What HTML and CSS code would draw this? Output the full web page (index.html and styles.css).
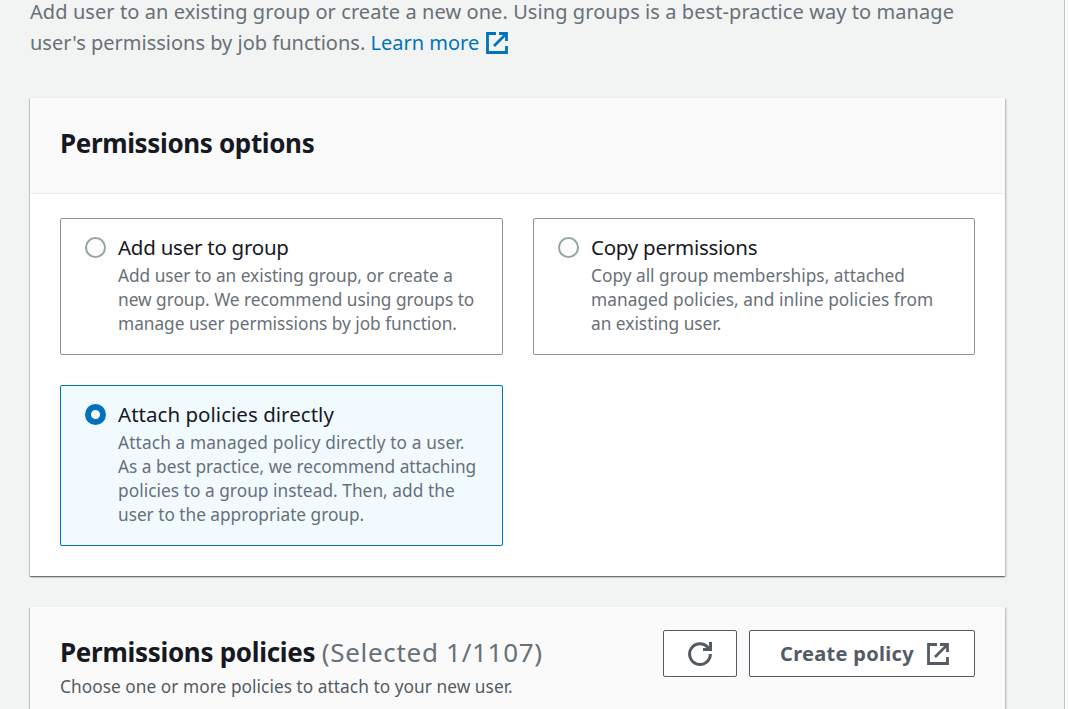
FILE: index.html
```
<!DOCTYPE html>
<html lang="en">
<head>
<meta charset="utf-8">
<title>Set permissions</title>
<link rel="stylesheet" href="styles.css">
</head>
<body>
<main class="page">
  <p class="intro"><span class="line loose">Add user to an existing group or create a new one. Using groups is a best-practice way to manage</span><span class="line">user's permissions by job functions. <a class="link">Learn more<svg class="ext" viewBox="0 0 22 22"><path d="M10 1.5H1.5V20.5H20.5V14M13 1.5H20.5V9M20 2L8 14"/></svg></a></span></p>

  <section class="panel">
    <header class="panel-head"><h2>Permissions options</h2></header>
    <div class="tiles">
      <div class="tile">
        <span class="radio"></span>
        <div>
          <div class="tile-title">Add user to group</div>
          <div class="desc"><span class="line tight">Add user to an existing group, or create a</span><span class="line tight">new group. We recommend using groups to</span><span class="line tight">manage user permissions by job function.</span></div>
        </div>
      </div>
      <div class="tile">
        <span class="radio"></span>
        <div>
          <div class="tile-title">Copy permissions</div>
          <div class="desc"><span class="line">Copy all group memberships, attached</span><span class="line slight">managed policies, and inline policies from</span><span class="line">an existing user.</span></div>
        </div>
      </div>
      <div class="tile selected">
        <span class="radio"></span>
        <div>
          <div class="tile-title wide">Attach policies directly</div>
          <div class="desc"><span class="line semiwide">Attach a managed policy directly to a user.</span><span class="line">As a best practice, we recommend attaching</span><span class="line slight">policies to a group instead. Then, add the</span><span class="line tight">user to the appropriate group.</span></div>
        </div>
      </div>
    </div>
  </section>

  <section class="panel policies">
    <div class="policies-text">
      <h2>Permissions policies <span class="count">(Selected 1/1107)</span></h2>
      <p class="sub">Choose one or more policies to attach to your new user.</p>
    </div>
    <div class="actions">
      <button class="btn refresh" aria-label="Refresh"><svg class="refresh-icon" viewBox="0 0 24 24"><path d="M22.4 12A10.4 10.4 0 1 1 19.8 5.2L22 7.5M22.5 0V7.5H15"/></svg></button>
      <button class="btn create">Create policy<svg class="ext" viewBox="0 0 22 22"><path d="M10 1.5H1.5V20.5H20.5V14M13 1.5H20.5V9M20 2L8 14"/></svg></button>
    </div>
  </section>
</main>
</body>
</html>
```
FILE: styles.css
```
* { box-sizing: border-box; }
html { background: #fafafa; }
body {
  margin: 0;
  height: 709px;
  font-family: "Noto Sans", sans-serif;
  color: #16191f;
}
.page {
  width: 1065px;
  height: 709px;
  overflow: hidden;
  padding: 0 59px 0 30px;
  background: #f2f3f3;
  border-right: 1px solid #bfc6c9;
}
h2, p { margin: 0; }
.line { display: block; white-space: nowrap; }
.intro { padding-bottom: 40px; font-size: 20px; line-height: 31px; color: #687078; }
.loose { line-height: 23px; padding-bottom: 4px; letter-spacing: 0.077px; }
.tight { letter-spacing: -0.03px; }
.slight { letter-spacing: 0.037px; }
.semiwide { letter-spacing: 0.125px; }
.link { color: #0073bb; }
.ext {
  width: 22px;
  height: 22px;
  fill: none;
  stroke: currentColor;
  stroke-width: 2.8;
}
.link .ext { margin-left: 7px; vertical-align: -4px; }

.panel {
  width: 975px;
  background: #fff;
  box-shadow: 0 1px 1px 0 rgba(0, 28, 36, .3), 1px 1px 2px 0 rgba(0, 28, 36, .25), -1px 1px 1px 0 rgba(0, 28, 36, .15), 0 2px 1px -1px rgba(0, 28, 36, .15);
}
.intro + .panel { height: 478px; }
.panel-head {
  height: 96px;
  padding: 27px 30px 0;
  background: #fafafa;
  border-bottom: 1px solid #eaeded;
}
h2 { font-size: 26px; line-height: 36px; font-weight: 700; letter-spacing: -0.36px; }
.tiles {
  display: grid;
  grid-template-columns: 443px 442px;
  grid-template-rows: 137px 161px;
  gap: 30px;
  padding: 24px 30px 30px;
}
.tile {
  display: flex;
  padding: 13px 0 0 24px;
  border: 1px solid #879596;
  border-radius: 2px;
}
.tile.selected { background: #f1faff; border-color: #0073bb; }
.radio {
  flex: none;
  width: 21px;
  height: 21px;
  margin: 5px 12px 0 0;
  border: 2px solid #95a5a6;
  border-radius: 50%;
  background: #fff;
}
.selected .radio { border: 6.5px solid #0073bb; }
.tile-title { font-size: 20.5px; line-height: 30px; letter-spacing: -0.25px; white-space: nowrap; }
.wide { letter-spacing: 0.03px; }
.desc { margin-top: 2px; font-size: 17.3px; line-height: 24px; color: #687078; }

.policies {
  display: flex;
  justify-content: space-between;
  align-items: flex-start;
  margin-top: 31px;
  height: 140px;
  padding: 23px 30px 0;
  background: #fafafa;
}
.policies-text { padding-top: 4px; white-space: nowrap; }
.policies h2 { letter-spacing: -0.3px; }
.count { font-weight: 400; letter-spacing: 0.7px; color: #687078; }
.sub { margin-top: 5px; font-size: 17.3px; line-height: 24px; letter-spacing: 0.04px; color: #545b64; }
.actions { display: flex; gap: 12px; }
.btn {
  display: flex;
  align-items: center;
  justify-content: center;
  height: 47px;
  padding: 0;
  border: 1px solid #545b64;
  border-radius: 2px;
  background: #fff;
  color: #545b64;
  font: 700 20px/30px "Noto Sans", sans-serif;
  letter-spacing: 0.31px;
}
.refresh { width: 74px; }
.create { width: 226px; gap: 13px; padding-left: 5px; }
.refresh-icon { width: 24px; height: 24px; fill: none; stroke: currentColor; stroke-width: 3; }
```
